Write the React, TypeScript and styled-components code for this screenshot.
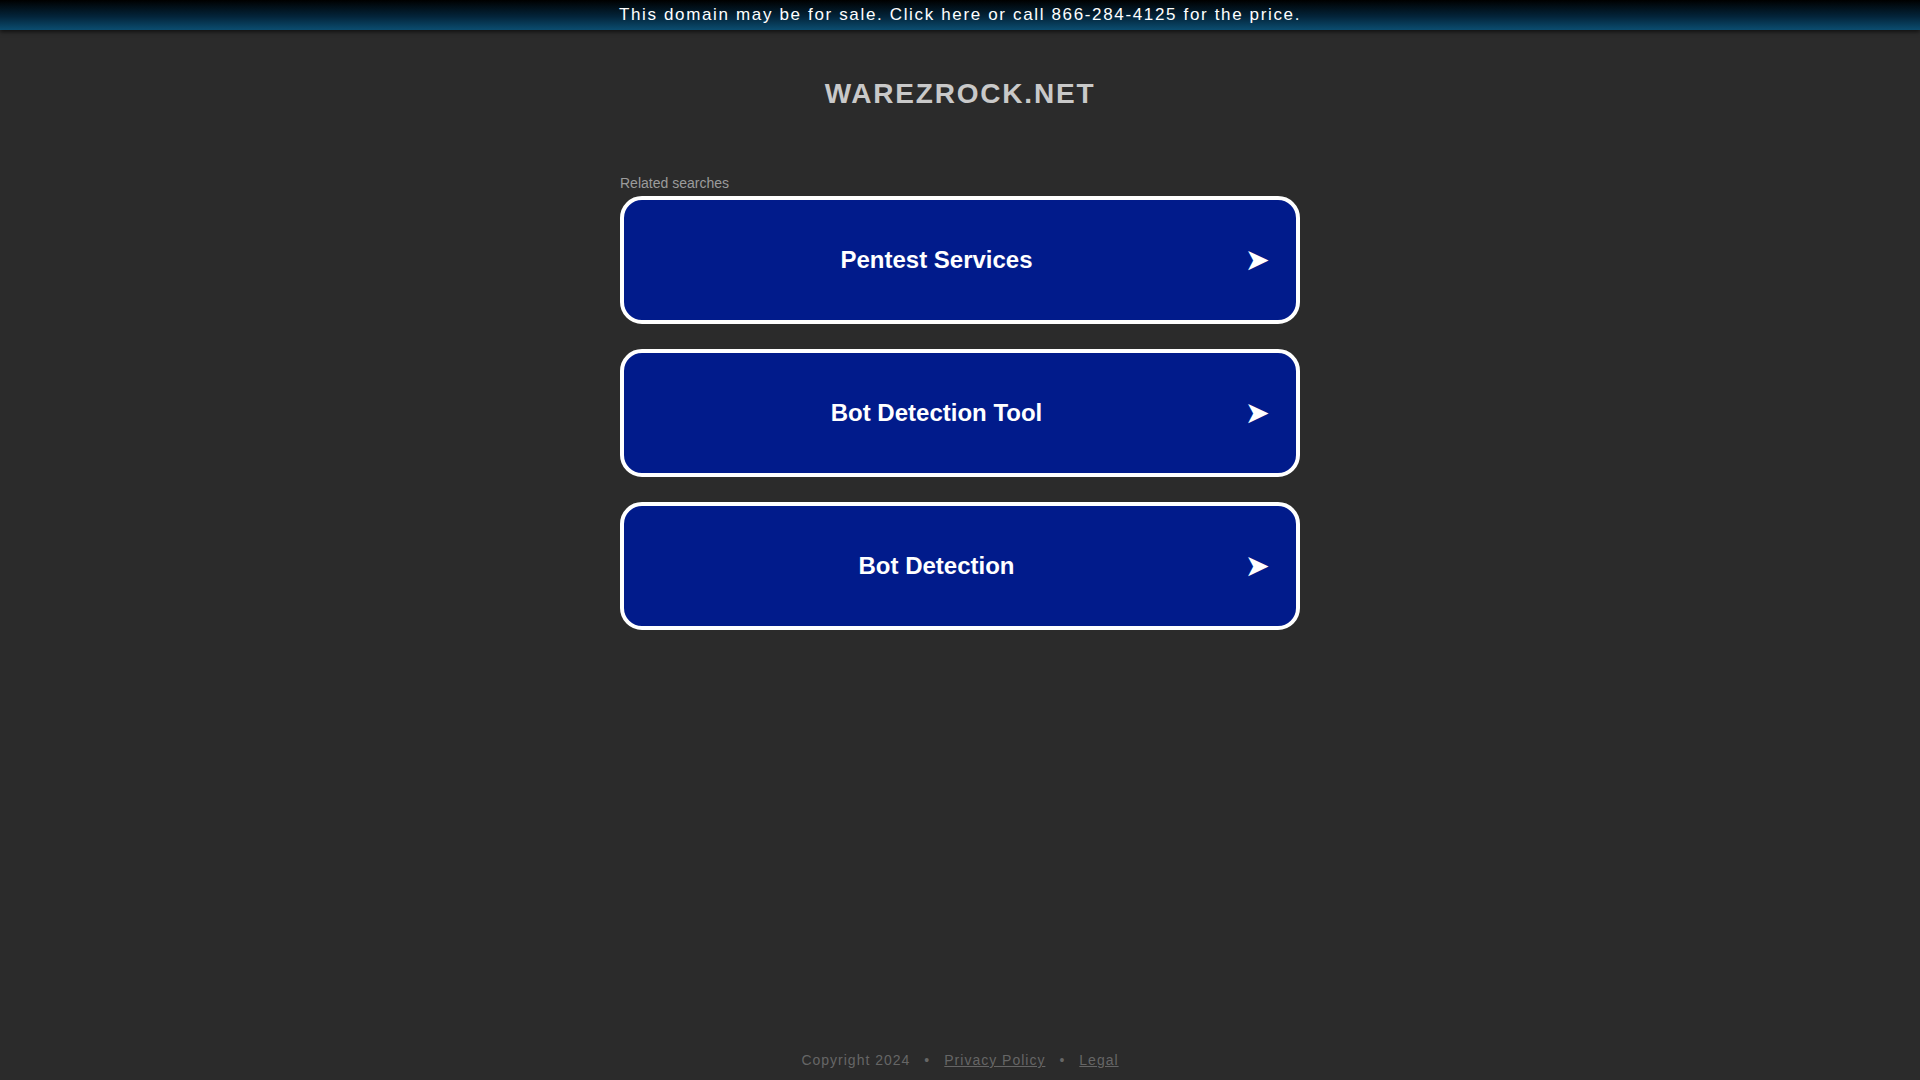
import React from "react";
import styled, { createGlobalStyle } from "styled-components";

const Global = createGlobalStyle`
  html, body { margin: 0; padding: 0; }
  body {
    background: #2b2b2b;
    font-family: Arial, "Liberation Sans", Helvetica, sans-serif;
  }
  * { box-sizing: border-box; }
`;

const Page = styled.div`
  min-height: 100vh;
  display: flex;
  flex-direction: column;
  align-items: center;
`;

const Banner = styled.a`
  align-self: stretch;
  height: 30px;
  display: flex;
  align-items: center;
  justify-content: center;
  background: linear-gradient(180deg, #000000 0%, #03243a 55%, #0b4d70 100%);
  box-shadow: 0 2px 4px rgba(0, 0, 0, 0.6);
  color: #ffffff;
  font-size: 17px;
  letter-spacing: 1.65px;
  text-decoration: none;
`;

const Title = styled.h1`
  margin: 47px 0 0;
  font-size: 28px;
  line-height: 34px;
  font-weight: bold;
  letter-spacing: 1.8px;
  color: #c9c9c9;
`;

const Content = styled.div`
  width: 680px;
  margin-top: 64px;
  display: flex;
  flex-direction: column;
`;

const Label = styled.div`
  font-size: 14px;
  line-height: 17px;
  color: #9c9c9c;
  margin-bottom: 4px;
`;

const List = styled.div`
  display: flex;
  flex-direction: column;
  gap: 25px;
`;

const Card = styled.a`
  height: 128px;
  display: flex;
  align-items: center;
  padding: 0 26px 0 29px;
  background: #011b8b;
  border: 4px solid #ffffff;
  border-radius: 22px;
  color: #ffffff;
  text-decoration: none;
`;

const CardText = styled.span`
  flex: 1;
  text-align: center;
  font-size: 24px;
  font-weight: bold;
`;

const Arrow = styled.span`
  width: 50px;
  text-align: right;
  font-size: 30px;
  line-height: 1;
  font-family: "DejaVu Sans", sans-serif;
`;

const Footer = styled.footer`
  margin-top: auto;
  padding-bottom: 10px;
  font-size: 14px;
  line-height: 20px;
  letter-spacing: 1px;
  color: #666666;
  display: flex;
  gap: 14px;
`;

const FooterLink = styled.a`
  color: #666666;
  text-decoration: underline;
`;

const items = ["Pentest Services", "Bot Detection Tool", "Bot Detection"];

export default function App() {
  return (
    <>
      <Global />
      <Page>
        <Banner href="#">This domain may be for sale. Click here or call 866-284-4125 for the price.</Banner>
        <Title>WAREZROCK.NET</Title>
        <Content>
          <Label>Related searches</Label>
          <List>
            {items.map((t) => (
              <Card key={t} href="#">
                <CardText>{t}</CardText>
                <Arrow>➤</Arrow>
              </Card>
            ))}
          </List>
        </Content>
        <Footer>
          <span>Copyright 2024</span>
          <span>•</span>
          <FooterLink href="#">Privacy Policy</FooterLink>
          <span>•</span>
          <FooterLink href="#">Legal</FooterLink>
        </Footer>
      </Page>
    </>
  );
}
